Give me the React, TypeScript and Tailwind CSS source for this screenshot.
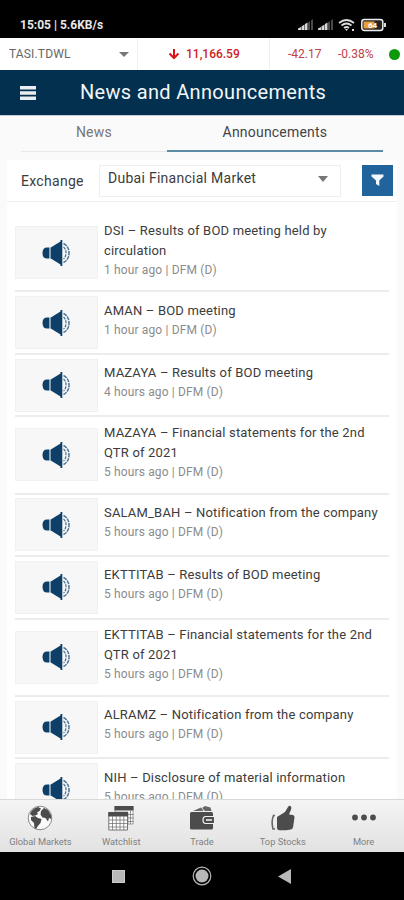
type Item = { title: string; second?: string; meta: string };

const items: Item[] = [
  { title: "DSI – Results of BOD meeting held by", second: "circulation", meta: "1 hour ago | DFM (D)" },
  { title: "AMAN – BOD meeting", meta: "1 hour ago | DFM (D)" },
  { title: "MAZAYA – Results of BOD meeting", meta: "4 hours ago | DFM (D)" },
  { title: "MAZAYA – Financial statements for the 2nd", second: "QTR of 2021", meta: "5 hours ago | DFM (D)" },
  { title: "SALAM_BAH – Notification from the company", meta: "5 hours ago | DFM (D)" },
  { title: "EKTTITAB – Results of BOD meeting", meta: "5 hours ago | DFM (D)" },
  { title: "EKTTITAB – Financial statements for the 2nd", second: "QTR of 2021", meta: "5 hours ago | DFM (D)" },
  { title: "ALRAMZ – Notification from the company", meta: "5 hours ago | DFM (D)" },
  { title: "NIH – Disclosure of material information", meta: "5 hours ago | DFM (D)" },
];

function Signal() {
  return (
    <svg width="16" height="12" viewBox="0 0 16 12">
      <path d="M0 11V9.5L3 8v3zM3.500 11V7.500l3-2V11zM7 11V5l2.500-1.500V11z" fill="#d8d8d8" />
      <path d="M10 11V3.500L12 2v9zM13 11V1.500L15 0v11z" fill="#4a4a4a" />
    </svg>
  );
}

function Speaker() {
  return (
    <svg width="28" height="28" viewBox="0 0 28 28" className="mr-[2px]">
      <path d="M5 8.500h2v11H5Q.5 19.500 .5 14T5 8.500z" fill="#0d3f68" />
      <path d="M7 8.500h1.800v11H7z" fill="#8aa5ba" />
      <path d="M8.800 8.500L18.500 2.500V1H20.300v26h-1.800v-1.500L8.800 19.500z" fill="#0d3f68" />
      <path d="M21.500 4.500Q27 7.500 27 14T21.500 23.500" fill="none" stroke="#4f7696" strokeWidth="1.500" strokeDasharray="4 .8" />
      <path d="M21.500 8Q24 10 24 14T21.500 20" fill="none" stroke="#4f7696" strokeWidth="1.300" strokeDasharray="3 1" />
    </svg>
  );
}

function GlobeIcon() {
  return (
    <svg width="26" height="26" viewBox="0 0 26 26">
      <circle cx="13" cy="13" r="11.800" fill="#fafafa" stroke="#888" strokeWidth="1" />
      <path d="M3 9Q5 3.500 11 2l3 1.500-1.500 2.500-2.500 1.500 1 1.500-2.500 1.500-3 .5z" fill="#4c4c4c" />
      <path d="M4 12l4-1 3 2 3.500 1-1 4-3 3.500-1.500 2.500-1.500-1-.5-5-3-3z" fill="#4c4c4c" />
      <path d="M14 6l3-3 4 2 3 5 .3 4-2.300-1-1 3.500-2.500-3.500-3-.5-2-3z" fill="#4c4c4c" />
    </svg>
  );
}

function WatchlistIcon() {
  return (
    <svg width="26" height="26" viewBox="0 0 26 26">
      <path d="M7 1.500h18V19h-5V7H7z" fill="#fff" stroke="#777" strokeWidth=".7" />
      <path d="M6.500 1H25.500v4.500H6.500z" fill="#4c4c4c" />
      <path d="M20 9.500h5.500M20 13h5.500M20 16.500h5.500M22.500 5v14" stroke="#777" strokeWidth=".8" />
      <path d="M.8 8h18.700v17H.8z" fill="#fff" stroke="#666" strokeWidth=".9" />
      <path d="M.3 7H20v4.500H.3z" fill="#4c4c4c" />
      <path d="M1 15h18.500M1 18.500h18.500M1 22h18.500M4.500 11v14M8.300 11v14M12 11v14M15.800 11v14" stroke="#777" strokeWidth=".8" />
    </svg>
  );
}

function TradeIcon() {
  return (
    <svg width="26" height="26" viewBox="0 0 26 26">
      <path d="M4 6L12 2.500 14.500 6zM13 3l3-2 5.500 1.500L22.500 6H16z" fill="#666" />
      <path d="M2.500 7h20q1.500 0 1.500 1.500V23q0 1.500-1.500 1.500h-20Q1 24.500 1 23V8.500Q1 7 2.500 7z" fill="#4c4c4c" />
      <path d="M16 11.500h9.500v7H16q-2-.5-2-3.500t2-3.500z" fill="#4c4c4c" stroke="#eee" strokeWidth="1.200" />
      <path d="M17 14h6v2h-6z" fill="#ccc" />
    </svg>
  );
}

function ThumbIcon() {
  return (
    <svg width="26" height="26" viewBox="0 0 26 26">
      <path d="M7 12L15 7 18 2Q19.500 0 21 1.500 22 3 20 7l-1 2.500 4 .5q1.800.5 1.500 2.500l-1.500 10q-.5 1.500-2 2l-5 .8H9.500Q7.500 25 7 23.500z" fill="#4c4c4c" />
      <path d="M5 10.500H3.500Q1 16.500 3 24h2" fill="none" stroke="#666" strokeWidth="1.600" />
    </svg>
  );
}

function MoreIcon() {
  return (
    <svg width="26" height="26" viewBox="0 0 26 26">
      <circle cx="4" cy="12.500" r="2.900" fill="#4c4c4c" />
      <circle cx="13" cy="12.500" r="2.900" fill="#4c4c4c" />
      <circle cx="22" cy="12.500" r="2.900" fill="#4c4c4c" />
    </svg>
  );
}

const tabs = [
  { label: "Global Markets", icon: <GlobeIcon /> },
  { label: "Watchlist", icon: <WatchlistIcon /> },
  { label: "Trade", icon: <TradeIcon /> },
  { label: "Top Stocks", icon: <ThumbIcon /> },
  { label: "More", icon: <MoreIcon /> },
];

function App() {
  return (
    <div className="w-[404px] h-[900px] flex flex-col overflow-hidden bg-[#fafafa] font-[Roboto,sans-serif] text-[#3c3c3c]">
      {/* status bar */}
      <div className="h-[38px] shrink-0 bg-black flex items-end justify-between pl-5 pr-[17px] pb-[6px] text-[#e8e8e8]">
        <p className="text-[12px] leading-[14px] font-bold whitespace-nowrap">15:05 | 5.6KB/s</p>
        <div className="flex items-center gap-1">
          <Signal />
          <Signal />
          <svg width="18" height="14" viewBox="0 0 18 14" fill="none" stroke="#ddd" strokeWidth="1.700">
            <path d="M1 5q7.500-6 15 0M3.500 7.500q5-4 10 0M6 10q2.500-2 5 0" />
            <path d="M7 11h3l-1.500 2zM14 11h2v2h-2z" fill="#ddd" stroke="none" />
          </svg>
          <svg width="27" height="14" viewBox="0 0 27 14">
            <rect x="1.800" y="1.500" width="21" height="11" rx="2.500" fill="#222" stroke="#eee" strokeWidth="1.500" />
            <rect x="3.500" y="3.500" width="11" height="7" fill="#e9a03a" />
            <path d="M24 5h2v4h-2z" fill="#ddd" />
            <text x="8" y="10" fontSize="8" fontWeight="700" fill="#fff">64</text>
          </svg>
        </div>
      </div>

      {/* index ticker */}
      <div className="h-8 shrink-0 bg-white flex items-center text-[12px] whitespace-nowrap">
        <div className="w-[138px] h-full border-r border-[#f0f0f0] flex items-center justify-between pl-[9px] pr-2 text-[#666]">
          <span className="tracking-[0.15px]">TASI.TDWL</span>
          <svg width="10" height="5" viewBox="0 0 10 5"><path d="M0 0h10L5 5z" fill="#777" /></svg>
        </div>
        <div className="w-[132px] h-full border-r border-[#f0f0f0] flex items-center pl-[30px] gap-[6px] text-[#d01c24] font-medium">
          <svg width="12" height="12" viewBox="0 0 12 12" fill="none" stroke="#dc1018" strokeWidth="2"><path d="M6 1v9M1.500 5.500L6 10l4.500-4.500" /></svg>
          <span>11,166.59</span>
        </div>
        <span className="ml-[18px] w-[50px] text-[#c0404a]">-42.17</span>
        <span className="w-[51px] text-[#c0404a]">-0.38%</span>
        <span className="size-[11px] rounded-full bg-[#0b990b]" />
      </div>

      <div className="h-[45px] shrink-0 bg-[#03304f] flex items-center pl-5">
        <svg width="16" height="14" viewBox="0 0 16 14"><path d="M0 0h16v3.500H0zM0 5.300h16v3.500H0zM0 10.500h16v3.500H0z" fill="#e8eef2" /></svg>
        <h1 className="ml-[44px] pb-[2px] text-[20px] tracking-[0.32px] leading-6 text-[#f2f6f8] whitespace-nowrap">News and Announcements</h1>
      </div>

      {/* tabs */}
      <div className="h-[37px] shrink-0 border-t border-[#c3cad8] flex px-[21px] text-[14px] tracking-[0.2px] leading-[33px] text-center">
        <div className="w-[147px] h-[36px] border-b border-[#e8e8e8] text-[#777]">News</div>
        <div className="w-[218px] h-[36px] border-b-2 border-[#5c8ba8] text-[#444]">Announcements</div>
      </div>

      <div className="flex-1 min-h-0 mx-[7px] mt-2 bg-white flex flex-col">
        <div className="h-[42px] shrink-0 flex items-center pl-[14px] border-b border-[#eee]">
          <span className="w-[78px] text-[14px] tracking-[0.3px] pt-[2px]">Exchange</span>
          <div className="w-[242px] h-8 border border-[#eee] flex items-center justify-between pl-2 pr-3 text-[14px] tracking-[0.27px] pb-1">
            <span>Dubai Financial Market</span>
            <svg width="10" height="6" viewBox="0 0 10 6"><path d="M0 0h10L5 6z" fill="#777" /></svg>
          </div>
          <div className="ml-[21px] w-[31px] h-[31px] bg-[#20649b] flex items-center justify-center">
            <svg width="13" height="13" viewBox="0 0 13 13"><path d="M.5 .5h12v2L8.300 6.500V12L5 10V6.500L.5 2.500z" fill="#f4f8fb" /></svg>
          </div>
        </div>

        <div className="flex-1 min-h-0 overflow-hidden pt-[13px] px-2">
          {items.map((item) => (
            <div
              key={item.title}
              className={`flex items-center border-b-2 border-[#ececec] ${item.second ? "h-[77.3px]" : "h-[62.5px]"}`}
            >
              <div className="w-[83px] h-[53px] shrink-0 bg-[#f7f7f7] border border-[#f1f1f1] flex items-center justify-center">
                <Speaker />
              </div>
              <div className="ml-[6px] pb-[6px] whitespace-nowrap">
                <p className="text-[13px] tracking-[0.18px] leading-5">
                  {item.title}
                  {item.second && <><br />{item.second}</>}
                </p>
                <p className="text-[12px] tracking-[0.14px] leading-[18px] text-[#8c8c8c]">{item.meta}</p>
              </div>
            </div>
          ))}
        </div>
      </div>

      {/* bottom navigation */}
      <div className="h-[53px] shrink-0 border-t border-[#d8d8d8] bg-linear-to-b from-[#f4f4f4] to-[#e2e2e2] grid grid-cols-5 pt-[5px]">
        {tabs.map((tab) => (
          <div key={tab.label} className="flex flex-col items-center">
            {tab.icon}
            <span className="mt-[5px] text-[9.3px] leading-3 text-[#808080] whitespace-nowrap">{tab.label}</span>
          </div>
        ))}
      </div>

      <div className="h-12 shrink-0 bg-black flex items-center pl-[112px]">
        <div className="size-[13px] bg-[#b8b8b8] border border-[#ccc]" />
        <svg className="ml-[67px]" width="20" height="20" viewBox="0 0 20 20"><circle cx="10" cy="10" r="6.500" fill="#b8b8b8" /><circle cx="10" cy="10" r="8.800" fill="none" stroke="#b8b8b8" strokeWidth="1.200" /></svg>
        <svg className="ml-[66px]" width="13" height="15" viewBox="0 0 13 15"><path d="M13 0v15L0 7.500z" fill="#b8b8b8" /></svg>
      </div>
    </div>
  );
}

export default App;
